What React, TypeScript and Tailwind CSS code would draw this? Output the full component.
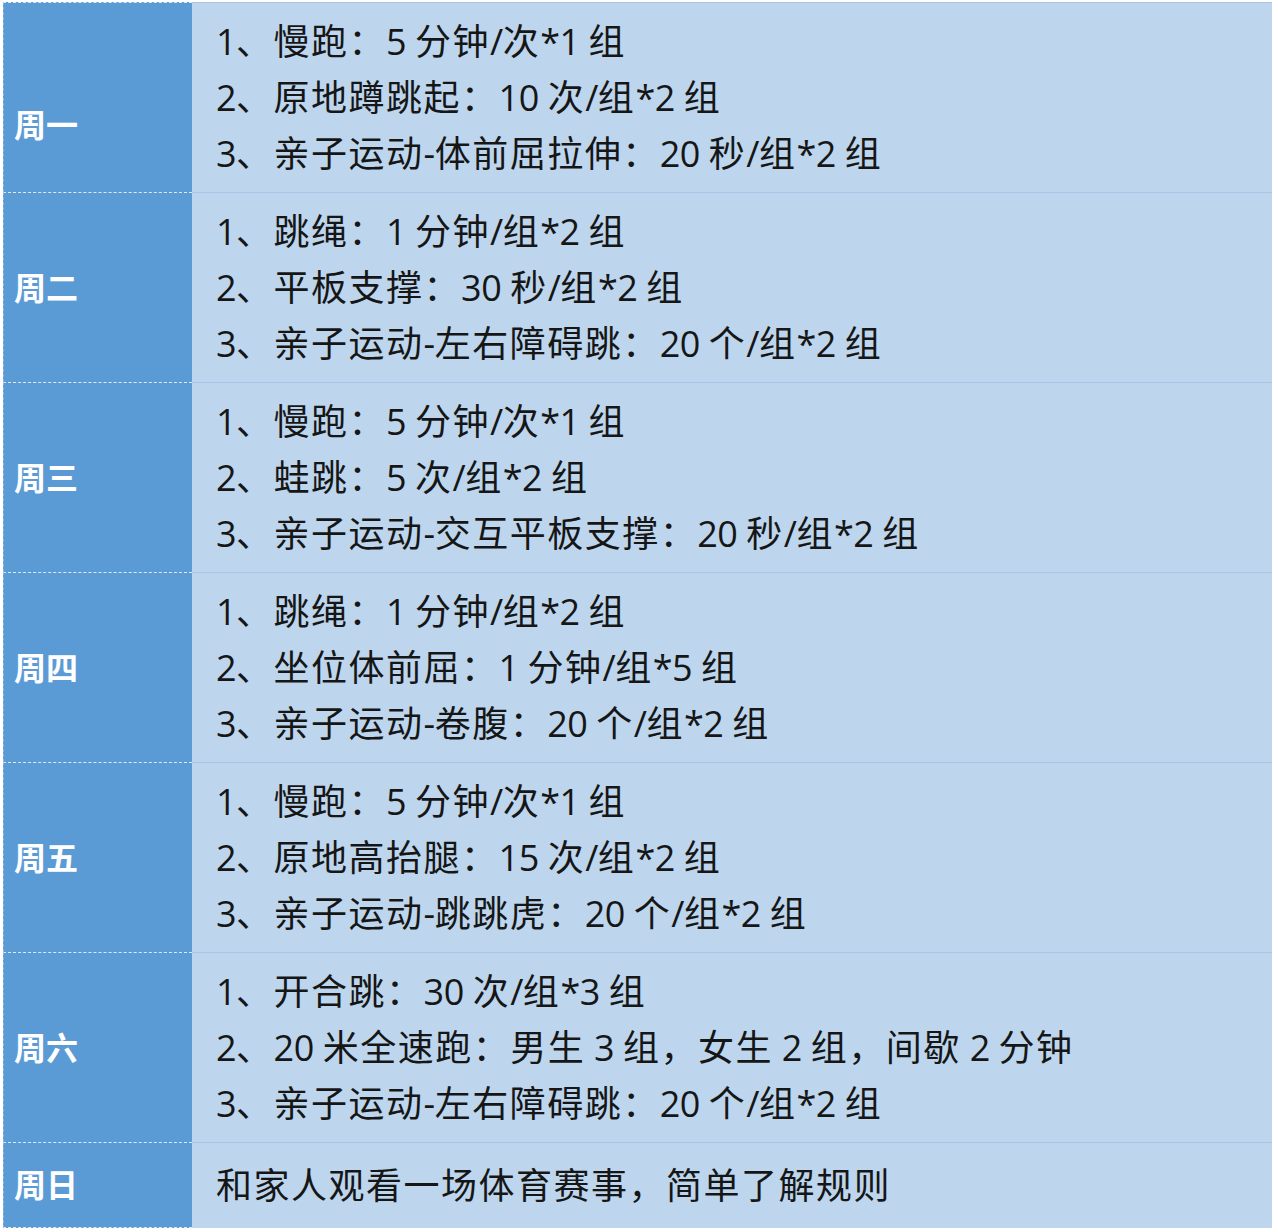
import React from "react";

const rows: { day: string; items: string[]; extra?: string }[] = [
  {
    day: "周一",
    items: ["1、慢跑：5 分钟/次*1 组", "2、原地蹲跳起：10 次/组*2 组", "3、亲子运动-体前屈拉伸：20 秒/组*2 组"],
    extra: "pt-[54px]",
  },
  {
    day: "周二",
    items: ["1、跳绳：1 分钟/组*2 组", "2、平板支撑：30 秒/组*2 组", "3、亲子运动-左右障碍跳：20 个/组*2 组"],
  },
  {
    day: "周三",
    items: ["1、慢跑：5 分钟/次*1 组", "2、蛙跳：5 次/组*2 组", "3、亲子运动-交互平板支撑：20 秒/组*2 组"],
  },
  {
    day: "周四",
    items: ["1、跳绳：1 分钟/组*2 组", "2、坐位体前屈：1 分钟/组*5 组", "3、亲子运动-卷腹：20 个/组*2 组"],
  },
  {
    day: "周五",
    items: ["1、慢跑：5 分钟/次*1 组", "2、原地高抬腿：15 次/组*2 组", "3、亲子运动-跳跳虎：20 个/组*2 组"],
  },
  {
    day: "周六",
    items: ["1、开合跳：30 次/组*3 组", "2、20 米全速跑：男生 3 组，女生 2 组，间歇 2 分钟", "3、亲子运动-左右障碍跳：20 个/组*2 组"],
  },
];

const font = { fontFamily: '"Open Sans", "Noto Sans CJK SC", sans-serif' };

function Line({ text }: { text: string }) {
  const parts = text.split(/([\x00-\x7F]+)/).filter((p) => p.length > 0);
  return (
    <div className="text-[36px] leading-[56px] text-[#161616] font-normal whitespace-nowrap tracking-[1.5px]">
      {parts.map((p, i) =>
        /^[\x00-\x7F]+$/.test(p) ? (
          <span key={i} className="tracking-[-0.5px]">
            {p}
          </span>
        ) : (
          <span key={i}>{p}</span>
        )
      )}
    </div>
  );
}

export default function App() {
  return (
    <div className="w-[1278px] h-[1232px] bg-white pl-[3px] pt-[2px]" style={font}>
      <div className="grid grid-cols-[189px_1080px] w-[1269px]">
        {rows.map((r) => (
          <React.Fragment key={r.day}>
            <div className={`h-[190px] bg-[#5b9bd5] border-t border-dashed border-white/80 border-l border-l-[#8cb9e3] flex items-center pl-[10px] ${r.extra ?? ""}`}>
              <span className="text-white font-bold text-[32px] leading-none">{r.day}</span>
            </div>
            <div className="h-[190px] bg-[#bdd6ee] border-t border-[#a9c5e5] flex flex-col justify-center pl-[24px]">
              {r.items.map((t) => (
                <Line key={t} text={t} />
              ))}
            </div>
          </React.Fragment>
        ))}
        <div className="h-[86px] bg-[#5b9bd5] border-t border-b border-dashed border-white/80 border-l border-l-[#8cb9e3] flex items-center pl-[10px]">
          <span className="text-white font-bold text-[32px] leading-none">周日</span>
        </div>
        <div className="h-[86px] bg-[#bdd6ee] border-t border-[#a9c5e5] flex items-center pl-[24px]">
          <Line text="和家人观看一场体育赛事，简单了解规则" />
        </div>
      </div>
    </div>
  );
}
